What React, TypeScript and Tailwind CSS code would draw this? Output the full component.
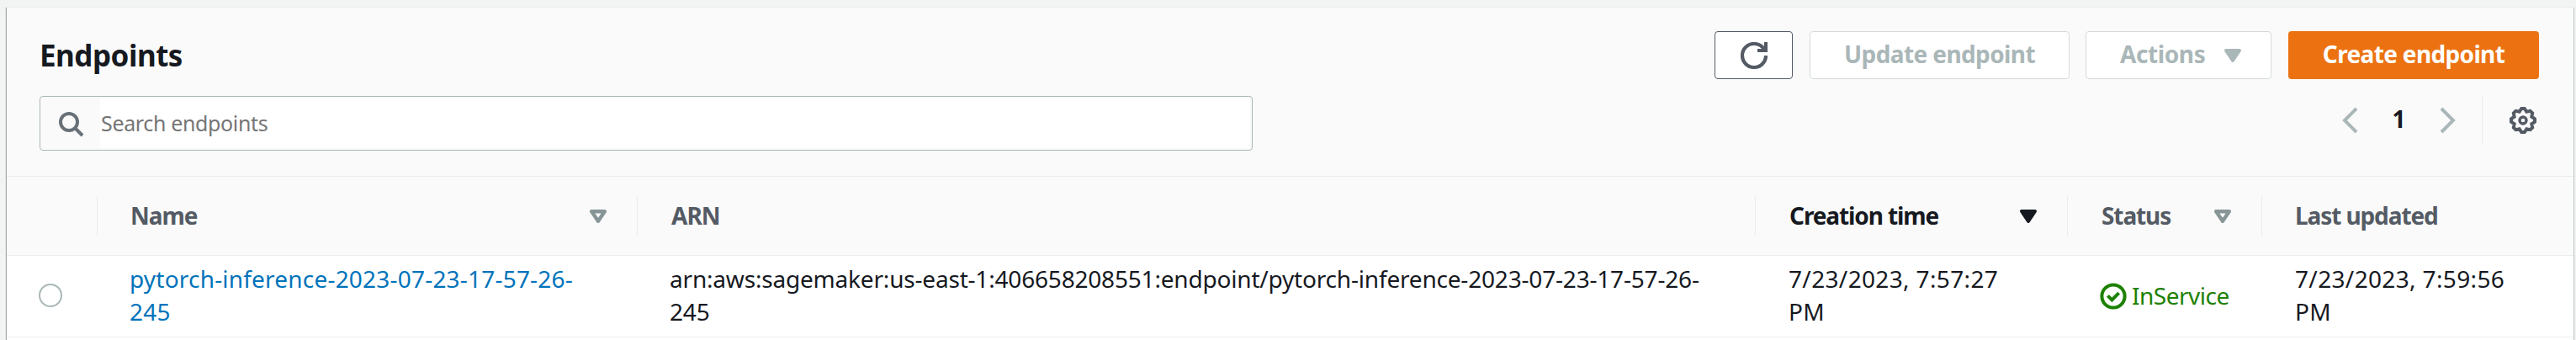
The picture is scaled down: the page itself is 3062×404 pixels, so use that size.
import React from "react";

const COLUMNS = "grid grid-cols-[108px_642px_1329px_371px_231px_370px]";

function RefreshIcon() {
  return (
    <svg className="size-8" viewBox="0 0 16 16" fill="none" stroke="currentColor" strokeWidth="2.1">
      <path d="M10 5h5V0" />
      <path d="M15 8a6.957 6.957 0 0 1-7 7 6.957 6.957 0 0 1-7-7 6.957 6.957 0 0 1 7-7 6.87 6.87 0 0 1 6.3 4" />
    </svg>
  );
}

function SearchIcon() {
  return (
    <svg className="size-8" viewBox="0 0 16 16" fill="none" stroke="currentColor" strokeWidth="2">
      <circle cx="7" cy="7" r="5" />
      <path d="m15 15-4.5-4.5" />
    </svg>
  );
}

function Chevron({ left }: { left?: boolean }) {
  return (
    <svg className="size-8" viewBox="0 0 16 16" fill="none" stroke="currentColor" strokeWidth="2">
      <path d={left ? "M12 1 5 8l7 7" : "m4 1 7 7-7 7"} />
    </svg>
  );
}

function GearIcon() {
  return (
    <svg className="size-8" viewBox="-8 -8 16 16" fill="none" stroke="currentColor">
      <circle r="2" strokeWidth="1.7" />
      <path
        strokeWidth="2"
        d="M-.9-7H.9L2.14-5.17 4.3-5.6 5.6-4.3 5.17-2.14 7-.9V.9L5.17 2.14 5.6 4.3 4.3 5.6 2.14 5.17.9 7H-.9L-2.14 5.17-4.3 5.6-5.6 4.3-5.17 2.14-7 .9V-.9L-5.17-2.14-5.6-4.3-4.3-5.6-2.14-5.17z"
      />
    </svg>
  );
}

function CheckCircle() {
  return (
    <svg className="size-8" viewBox="0 0 16 16" fill="none" stroke="currentColor" strokeWidth="2">
      <circle cx="8" cy="8" r="6.8" />
      <path d="m4.7 7.7 2.5 2.5 4.1-4.1" />
    </svg>
  );
}

function Caret({ filled }: { filled?: boolean }) {
  return (
    <svg
      className="size-8"
      viewBox="0 0 16 16"
      fill={filled ? "currentColor" : "none"}
      stroke="currentColor"
      strokeWidth={filled ? 2 : 2.2}
      strokeLinejoin="round"
    >
      <path d={filled ? "M4 5h8l-4 6z" : "M4.1 5.1h7.8L8 10.9z"} />
    </svg>
  );
}

function HeaderCell({
  label,
  sort,
  active,
  last,
  text,
}: {
  label: string;
  sort?: boolean;
  active?: boolean;
  last?: boolean;
  text: string;
}) {
  return (
    <div
      className={`mt-[23px] flex h-[47px] items-center justify-between pl-[39px] ${last ? "" : "border-r border-[#eaeded]"} ${active ? "text-[#16191f]" : "text-[#545b64]"}`}
    >
      <span className={`font-bold whitespace-nowrap ${text}`}>{label}</span>
      {sort && (
        <span className={`mr-[30px] ${active ? "" : "text-[#879596]"}`}>
          <Caret filled={active} />
        </span>
      )}
    </div>
  );
}

export default function App() {
  return (
    <div className="h-[404px] w-[3062px] overflow-hidden bg-[#f2f3f3] pt-2 pl-2 font-['Noto_Sans',sans-serif] text-[28px] leading-[39px] text-[#16191f]">
      <div className="h-[420px] w-[3051px] border-t border-[#eaeded] bg-white shadow-[0_1px_1px_0_rgba(0,28,36,0.3),1px_1px_1px_0_rgba(0,28,36,0.15),-1px_1px_1px_0_rgba(0,28,36,0.3)]">
        <header className="h-[201px] border-b border-[#eaeded] bg-[#fafafa] pr-[41px] pl-[39px]">
          <div className="flex h-[105px] items-start justify-between pt-7">
            <h1 className="mt-[7px] text-[35px] leading-[44px] font-bold tracking-[-0.5px]">Endpoints</h1>
            <div className="flex font-bold">
              <button className="mr-5 flex h-[57px] w-[93px] items-center justify-center rounded-[4px] border border-[#545b64] bg-white text-[#545b64]">
                <RefreshIcon />
              </button>
              <button className="mr-[19px] h-[57px] w-[309px] rounded-[4px] border border-[#d5dbdb] bg-white pb-[2px] tracking-[-0.6px] text-[#aab7b8]">
                Update endpoint
              </button>
              <button className="mr-5 flex h-[57px] w-[221px] items-center rounded-[4px] border border-[#d5dbdb] bg-white pl-10 text-[#aab7b8]">
                <span className="w-[118px] pb-[2px] text-left tracking-[-0.4px]">Actions</span>
                <Caret filled />
              </button>
              <button className="h-[57px] w-[298px] rounded-[4px] bg-[#ec7211] pb-[2px] tracking-[-0.65px] text-white">
                Create endpoint
              </button>
            </div>
          </div>
          <div className="flex items-start justify-between">
            <div className="flex h-[65px] w-[1442px] items-stretch rounded-[4px] border border-[#aab7b8] bg-[#fafafa] p-[2px]">
              <div className="flex w-[69px] items-center pl-[18px] text-[#687078]">
                <SearchIcon />
              </div>
              <div className="flex flex-1 items-center bg-white pl-px text-[25px] tracking-[-0.35px] text-[#757575]">
                Search endpoints
              </div>
            </div>
            <div className="flex h-[58px] items-center pr-[3px] text-[#aab7b8]">
              <Chevron left />
              <span className="w-[85px] pb-[3px] text-center font-bold text-[#16191f]">1</span>
              <Chevron />
              <span className="ml-6 h-[58px] border-l border-[#eaeded]" />
              <span className="ml-8 text-[#545b64]">
                <GearIcon />
              </span>
            </div>
          </div>
        </header>

        <div className={`${COLUMNS} h-[94px] border-b border-[#eaeded] bg-[#fafafa]`}>
          <div className="mt-[23px] h-[47px] border-r border-[#eaeded]" />
          <HeaderCell label="Name" sort text="tracking-[-1px]" />
          <HeaderCell label="ARN" text="pl-px tracking-[-1px]" />
          <HeaderCell label="Creation time" sort active text="pl-px tracking-[-1.1px]" />
          <HeaderCell label="Status" sort text="pl-px tracking-[-1.1px]" />
          <HeaderCell label="Last updated" last text="tracking-[-1.1px]" />
        </div>

        <div className={`${COLUMNS} h-[97px] border-b border-[#eaeded]`}>
          <div className="flex items-center pb-[3px] pl-[38px]">
            <span className="size-7 rounded-full border-2 border-[#aab7b8] bg-white" />
          </div>
          <div className="pt-2 pl-[38px] tracking-[0.2px] text-[#0073bb]">
            pytorch-inference-2023-07-23-17-57-26-
            <br />
            245
          </div>
          <div className="pt-2 pl-[38px] tracking-[-0.19px]">
            arn:aws:sagemaker:us-east-1:406658208551:endpoint/pytorch-inference-2023-07-23-17-57-26-
            <br />
            245
          </div>
          <div className="pt-2 pl-[39px] tracking-[0.35px]">
            7/23/2023, 7:57:27
            <br />
            PM
          </div>
          <div className="flex items-center gap-[6px] pl-[38px] tracking-[-0.5px] text-[#1d8102]">
            <CheckCircle />
            <span className="pb-px">InService</span>
          </div>
          <div className="pt-2 pl-[39px] tracking-[0.35px]">
            7/23/2023, 7:59:56
            <br />
            PM
          </div>
        </div>
      </div>
    </div>
  );
}
